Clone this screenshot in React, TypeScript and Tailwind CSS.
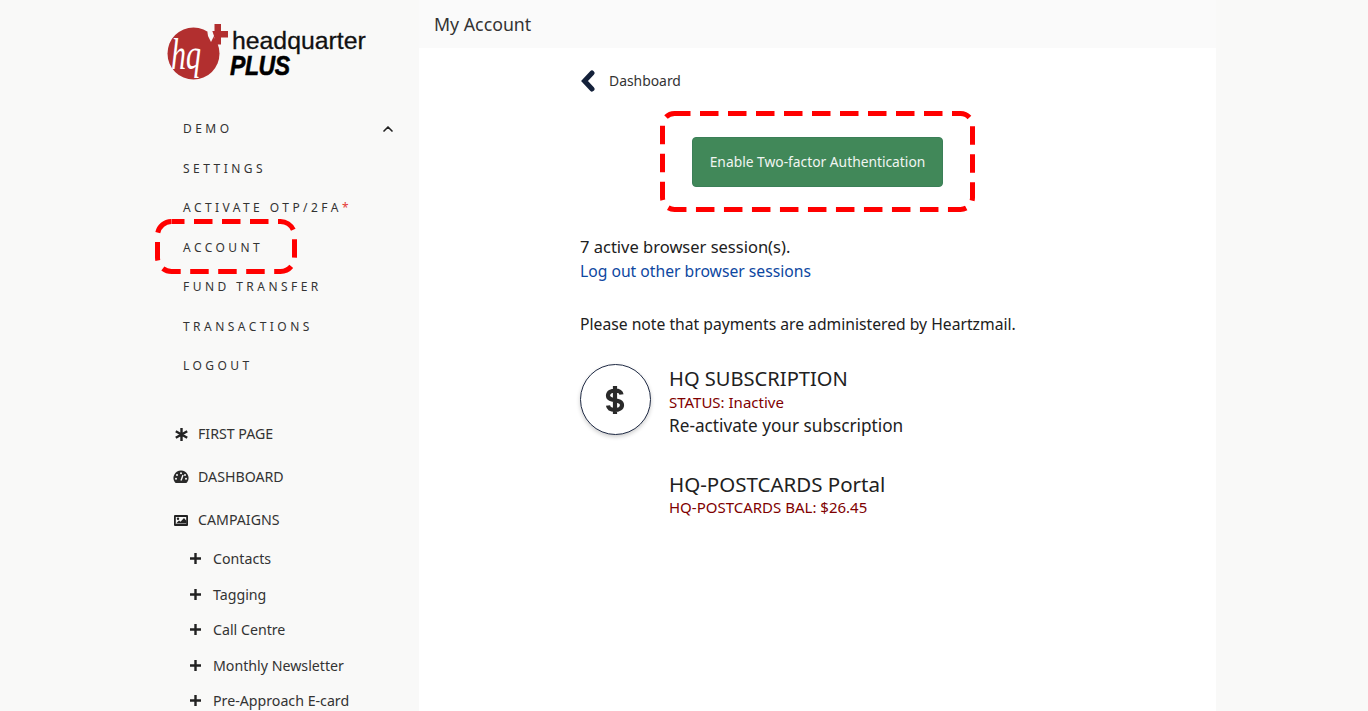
import React from "react";
import { ChevronUp } from "lucide-react";

const font = { fontFamily: '"Noto Sans", sans-serif' };

function DashedBox({ w, h, r, offset, className }: { w: number; h: number; r: number; offset: number; className: string }) {
  return (
    <svg className={"absolute " + className} width={w} height={h} viewBox={`0 0 ${w} ${h}`} fill="none">
      <rect x="2.5" y="2.5" width={w - 5} height={h - 5} rx={r} stroke="#ff0000" strokeWidth="5" strokeDasharray="18.5 9.5" strokeDashoffset={offset} />
    </svg>
  );
}

function Logo() {
  return (
    <div className="relative h-[64px] w-[200px]">
      <svg className="absolute left-0 top-0" width="64" height="64" viewBox="0 0 64 64">
        <path d="M47.500 4h6.500v7h7v6.500h-7v7h-6.500v-7h-7v-6.500h7z" fill="#b22f2f" />
        <circle cx="26.500" cy="33.500" r="26" fill="#b22f2f" />
        <path d="M40 9l5 1 2 6 -3 6 -3-6z" fill="#f9f9f8" />
        <g transform="translate(4 34) scale(1 1.45)">
          <text x="0" y="10" fill="#ffffff" fontFamily="Liberation Serif" fontStyle="italic" fontSize="30">hq</text>
        </g>
      </svg>
      <span className="absolute left-[65px] top-[9px] text-[24.8px] leading-[24px] text-[#111111] [-webkit-text-stroke:0.3px_#111111]" style={{ fontFamily: '"Liberation Sans", sans-serif' }}>
        headquarter
      </span>
      <span className="absolute left-[63px] top-[34px] origin-left scale-x-[0.82] text-[28px] leading-[24px] font-bold italic tracking-[-0.5px] text-black [-webkit-text-stroke:0.6px_black]" style={{ fontFamily: '"Liberation Sans", sans-serif' }}>
        PLUS
      </span>
    </div>
  );
}

function TopItem({ label, star, chevron }: { label: string; star?: boolean; chevron?: boolean }) {
  return (
    <div className="flex h-[39.5px] items-center justify-between pl-[33px] pr-[23px] text-[12px] tracking-[3.45px] text-[#333333]">
      <span>
        {label}
        {star && <span className="text-[#e53935]">*</span>}
      </span>
      {chevron && <ChevronUp size={16} strokeWidth={2.5} className="text-[#222222]" />}
    </div>
  );
}

function IconItem({ icon, label, h }: { icon: React.ReactNode; label: string; h: string }) {
  return (
    <div className={"flex items-center pl-[23px] text-[14.2px] text-[#333333] " + h}>
      <span className="flex w-[25px] items-center">{icon}</span>
      {label}
    </div>
  );
}

function SubItem({ label }: { label: string }) {
  return (
    <div className="flex h-[35.5px] items-center pl-[39px] text-[14.2px] text-[#333333]">
      <svg className="mr-[11px]" width="13" height="13" viewBox="0 0 13 13">
        <path d="M6.500 1v11M1 6.500h11" stroke="#222222" strokeWidth="2.400" />
      </svg>
      {label}
    </div>
  );
}

export default function App() {
  return (
    <div className="relative flex h-[711px] w-full overflow-hidden bg-[#f9f9f8]" style={font}>
      <aside className="ml-[150px] h-full w-[269px] shrink-0 pt-[20px]">
        <div className="pl-[17px]">
          <Logo />
        </div>
        <nav className="mt-[25.5px]">
          <TopItem label="DEMO" chevron />
          <TopItem label="SETTINGS" />
          <TopItem label="ACTIVATE OTP/2FA" star />
          <TopItem label="ACCOUNT" />
          <TopItem label="FUND TRANSFER" />
          <TopItem label="TRANSACTIONS" />
          <TopItem label="LOGOUT" />
        </nav>
        <div className="mt-[26.5px]">
          <IconItem
            h="h-[43px]"
            label="FIRST PAGE"
            icon={
              <svg className="ml-[1px]" width="15" height="15" viewBox="0 0 15 15">
                <path d="M7.500 1v13M1.800 4.200l11.400 6.600M13.200 4.200L1.800 10.800" stroke="#222222" strokeWidth="2.400" />
              </svg>
            }
          />
          <IconItem
            h="h-[43px]"
            label="DASHBOARD"
            icon={
              <svg width="16" height="14" viewBox="0 0 16 14">
                <path d="M8 0.500a7.500 7.500 0 0 0-6.300 11.600c.3.500.8.900 1.400.900h9.800c.6 0 1.100-.4 1.400-.9A7.500 7.500 0 0 0 8 .5z" fill="#2a2a2a" />
                <circle cx="8" cy="3.200" r="1" fill="#f9f9f8" />
                <circle cx="4" cy="5" r="1" fill="#f9f9f8" />
                <circle cx="12" cy="5" r="1" fill="#f9f9f8" />
                <circle cx="3" cy="8.800" r="1" fill="#f9f9f8" />
                <circle cx="13" cy="8.800" r="1" fill="#f9f9f8" />
                <path d="M8 10.500L10 5" stroke="#f9f9f8" strokeWidth="1.400" />
              </svg>
            }
          />
          <IconItem
            h="h-[43px]"
            label="CAMPAIGNS"
            icon={
              <svg className="ml-[1px]" width="14" height="11" viewBox="0 0 14 11">
                <path fillRule="evenodd" d="M1 0h12a1 1 0 0 1 1 1v9a1 1 0 0 1-1 1H1a1 1 0 0 1-1-1V1a1 1 0 0 1 1-1zm.8 2v7h10.400V2z" fill="#222222" />
                <path d="M2 8.500l3-3 1.500 1.300L10 3l2.500 3v2.500z" fill="#222222" />
                <circle cx="4" cy="3.800" r="1.200" fill="#222222" />
              </svg>
            }
          />
          <div className="-mt-[0.5px]">
            <SubItem label="Contacts" />
            <SubItem label="Tagging" />
            <SubItem label="Call Centre" />
            <SubItem label="Monthly Newsletter" />
            <SubItem label="Pre-Approach E-card" />
          </div>
        </div>
      </aside>

      <main className="h-full w-[797px] shrink-0 bg-white">
        <header className="flex h-[48px] items-center bg-[#fafafa] pl-[15px] text-[17.75px] text-[#333333]">My Account</header>
        <div className="pl-[161px] text-[#212121]">
          <div className="mt-[21px] flex h-[24px] items-center text-[13.9px] text-[#333333]">
            <svg className="mr-[14px]" width="15" height="22" viewBox="0 0 15 22" fill="none">
              <path d="M12 3L4.500 11l7.500 8" stroke="#14213a" strokeWidth="5" strokeLinecap="round" />
            </svg>
            Dashboard
          </div>
          <div className="mt-[44px] ml-[112px] flex h-[50px] w-[251px] items-center justify-center rounded-[4px] border border-[#3b7f58] bg-[#418859] text-[13.8px] text-[#f0f5f1]">
            Enable Two-factor Authentication
          </div>
          <p className="mt-[48px] text-[16.5px] leading-[24px]">7 active browser session(s).</p>
          <p className="text-[15.7px] leading-[24px] text-[#0d47a1]">Log out other browser sessions</p>
          <p className="mt-[29px] text-[15.7px] leading-[24px]">Please note that payments are administered by Heartzmail.</p>
          <div className="mt-[28px] flex">
            <div className="flex h-[71px] w-[71px] shrink-0 items-center justify-center rounded-full border border-[#1f2a44] bg-white shadow-[0_2px_4px_rgba(0,0,0,0.2)]">
              <svg className="-ml-[1px]" width="20" height="32" viewBox="0 0 20 32" fill="none">
                <path d="M16.500 10.500C16 7.500 13.500 6.500 10 6.500c-3.500 0-7 1.500-7 5 0 7 14 2.500 14 9.500 0 3.500-3.500 5-7 5-3.500 0-6.500-1.500-7-4.500M10 2v28" stroke="#2a2a2a" strokeWidth="4.200" />
              </svg>
            </div>
            <div className="ml-[18px] pt-[1px]">
              <p className="text-[20.1px] leading-[28px]">HQ SUBSCRIPTION</p>
              <p className="-mt-[1px] text-[15px] leading-[20px] text-[#7f0000]">STATUS: Inactive</p>
              <p className="mt-[1px] text-[17.2px] leading-[26px]">Re-activate your subscription</p>
            </div>
          </div>
          <div className="mt-[31px] ml-[89px]">
            <p className="text-[20.5px] leading-[28px]">HQ-POSTCARDS Portal</p>
            <p className="text-[15px] leading-[18px] text-[#7f0000]">HQ-POSTCARDS BAL: $26.45</p>
          </div>
        </div>
      </main>

      <DashedBox w={142} h={55} r={14} offset={5.5} className="left-[155px] top-[219px]" />
      <DashedBox w={315} h={101} r={12} offset={2.5} className="left-[660px] top-[111px]" />
    </div>
  );
}
